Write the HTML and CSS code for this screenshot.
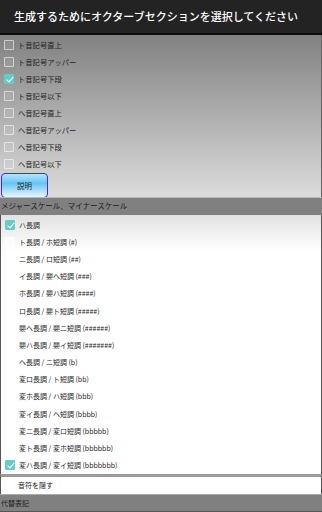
FILE: index.html
```html
<!DOCTYPE html>
<html lang="ja">
<head>
    <meta charset="UTF-8">
    <meta name="viewport" content="width=device-width, initial-scale=1.0">
    <title>オクターブセクション</title>
    <link rel="stylesheet" href="styles.css">
</head>
<body>
    <header class="title-bar">生成するためにオクターブセクションを選択してください</header>

    <section class="octaves">
        <label class="row"><span class="box"></span>ト音記号直上</label>
        <label class="row"><span class="box"></span>ト音記号アッパー</label>
        <label class="row"><span class="box checked"></span>ト音記号下段</label>
        <label class="row"><span class="box"></span>ト音記号以下</label>
        <label class="row"><span class="box"></span>ヘ音記号直上</label>
        <label class="row"><span class="box"></span>ヘ音記号アッパー</label>
        <label class="row"><span class="box"></span>ヘ音記号下段</label>
        <label class="row"><span class="box"></span>ヘ音記号以下</label>
        <button class="btn-help">説明</button>
    </section>

    <div class="band">メジャースケール、マイナースケール</div>

    <section class="scales">
        <label class="row"><span class="box checked"></span>ハ長調</label>
        <label class="row"><span class="box"></span>ト長調 / ホ短調 (#)</label>
        <label class="row"><span class="box"></span>ニ長調 / ロ短調 (##)</label>
        <label class="row"><span class="box"></span>イ長調 / 嬰ヘ短調 (###)</label>
        <label class="row"><span class="box"></span>ホ長調 / 嬰ハ短調 (####)</label>
        <label class="row"><span class="box"></span>ロ長調 / 嬰ト短調 (#####)</label>
        <label class="row"><span class="box"></span>嬰ヘ長調 / 嬰ニ短調 (######)</label>
        <label class="row"><span class="box"></span>嬰ハ長調 / 嬰イ短調 (#######)</label>
        <label class="row"><span class="box"></span>ヘ長調 / ニ短調 (b)</label>
        <label class="row"><span class="box"></span>変ロ長調 / ト短調 (bb)</label>
        <label class="row"><span class="box"></span>変ホ長調 / ハ短調 (bbb)</label>
        <label class="row"><span class="box"></span>変イ長調 / ヘ短調 (bbbb)</label>
        <label class="row"><span class="box"></span>変ニ長調 / 変ロ短調 (bbbbb)</label>
        <label class="row"><span class="box"></span>変ト長調 / 変ホ短調 (bbbbbb)</label>
        <label class="row"><span class="box checked"></span>変ハ長調 / 変イ短調 (bbbbbbb)</label>
    </section>

    <div class="hide-notes">音符を隠す</div>

    <div class="band bottom">代替表記</div>
</body>
</html>
```

FILE: styles.css
```css
* {
    margin: 0;
    padding: 0;
    box-sizing: border-box;
}

body {
    font-family: "Noto Sans CJK JP", "Noto Sans", sans-serif;
    width: 322px;
    height: 512px;
    overflow: hidden;
    background: #fff;
    color: #222;
}

.title-bar {
    height: 35px;
    background: #232323;
    border-bottom: 2px solid #0c0c0c;
    color: #fff;
    font-size: 11px;
    font-weight: 500;
    line-height: 33px;
    padding-left: 14px;
    white-space: nowrap;
}

.octaves {
    height: 162px;
    background: linear-gradient(to bottom, #818181 0%, #dcdcdc 100%);
    padding-top: 1px;
    border-right: 1px solid #666;
}

.row {
    display: flex;
    align-items: center;
    height: 17px;
    padding-left: 4px;
    font-size: 7.3px;
    color: #1d1d1d;
    white-space: nowrap;
}

.box {
    width: 10px;
    height: 10px;
    margin-right: 4px;
    border: 1px solid rgba(255, 255, 255, 0.55);
    background: rgba(255, 255, 255, 0.08);
    border-radius: 1px;
    position: relative;
}

.box.checked {
    background: #62cfc3;
    border-color: #62cfc3;
}

.box.checked::after {
    content: "";
    position: absolute;
    left: 3px;
    top: 0;
    width: 3px;
    height: 6px;
    border-right: 1.5px solid #fff;
    border-bottom: 1.5px solid #fff;
    transform: rotate(40deg);
}

.btn-help {
    display: block;
    margin: 1px 0 0 1px;
    width: 47px;
    height: 25px;
    border: 1px solid #3c2fe0;
    border-radius: 4px;
    background: linear-gradient(to bottom, #b4e6ff 0%, #67c4f5 40%, #e8f6ff 100%);
    font-family: inherit;
    font-size: 7.5px;
    color: #222;
}

.band {
    height: 18px;
    background: #808080;
    border-top: 1px solid #b8b8b8;
    font-size: 7.5px;
    line-height: 16px;
    padding-left: 1px;
    color: #1a1a1a;
    white-space: nowrap;
}

.scales {
    height: 259px;
    background: linear-gradient(to bottom, #e2e2e2 0%, #ffffff 14%, #ffffff 100%);
    border-left: 1px solid #555;
    border-right: 1px solid #555;
    padding-top: 1px;
}

.scales .row {
    height: 17.2px;
    padding-left: 4px;
    font-size: 7px;
}

.scales .box {
    border-color: rgba(255, 255, 255, 0.9);
    background: rgba(255, 255, 255, 0.6);
}

.scales .box.checked {
    background: #62cfc3;
    border-color: #62cfc3;
}

.hide-notes {
    height: 20px;
    border-top: 3px solid #9a9a9a;
    border-left: 1px solid #555;
    border-right: 1px solid #555;
    background: #fff;
    font-size: 7px;
    line-height: 17px;
    padding-left: 17px;
}

.band.bottom {
    border-top: 1px solid #aaa;
    border-bottom: 2px solid #555;
    height: 19px;
    font-size: 7px;
}
```
